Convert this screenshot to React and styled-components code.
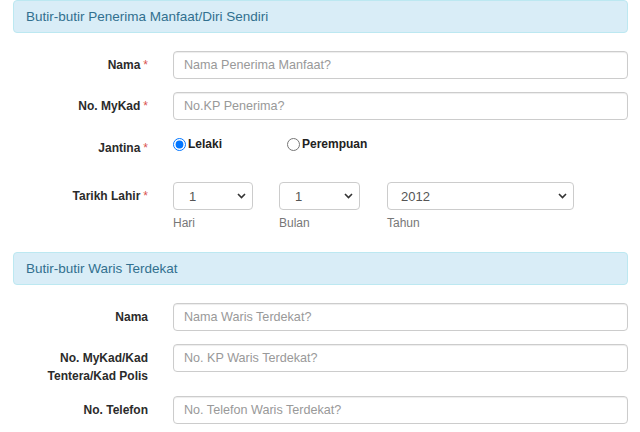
import React from 'react';
import styled, { createGlobalStyle } from 'styled-components';

const GlobalStyle = createGlobalStyle`
  body {
    margin: 0;
    background: #fff;
    font-family: "Liberation Sans", Arial, sans-serif;
    color: #333;
  }
`;

const Page = styled.div`
  padding: 0 12px 0 13px;
  width: 640px;
  box-sizing: border-box;
`;

const PanelHeading = styled.div`
  height: 33px;
  box-sizing: border-box;
  border: 1px solid #bce8f1;
  border-radius: 4px;
  background: #d9edf7;
  color: #31708f;
  font-size: 13.5px;
  line-height: 31px;
  padding: 0 12px;
  margin-bottom: 18px;
`;

const Row = styled.div`
  display: grid;
  grid-template-columns: 135px 1fr;
  column-gap: 25px;
  align-items: start;
  margin-bottom: ${(p) => (p.mb !== undefined ? p.mb : 13)}px;
  min-height: ${(p) => p.minH || 0}px;
`;

const Label = styled.label`
  text-align: right;
  font-weight: bold;
  font-size: 12px;
  line-height: 18px;
  color: #2b2b2b;
  padding-top: ${(p) => (p.pt !== undefined ? p.pt : 5)}px;
`;

const Req = styled.span`
  color: #d9534f;
  font-weight: normal;
  margin-left: 3px;
`;

const TextInput = styled.input`
  width: 100%;
  height: 28px;
  box-sizing: border-box;
  border: 1px solid #ccc;
  border-radius: 4px;
  box-shadow: inset 0 1px 1px rgba(0, 0, 0, 0.075);
  padding: 0 10px;
  font-family: inherit;
  font-size: 12.6px;
  color: #555;
  &::placeholder {
    color: #999;
  }
`;

const RadioGroup = styled.div`
  display: flex;
  padding-top: 4px;
`;

const RadioOption = styled.label`
  display: flex;
  align-items: center;
  width: 114px;
  font-weight: bold;
  font-size: 12px;
  color: #222;
  input {
    margin: 0 2px 0 0;
    width: 13px;
    height: 13px;
    accent-color: #0075ff;
  }
`;

const DateGroup = styled.div`
  display: flex;
`;

const DateField = styled.div`
  width: ${(p) => p.w}px;
  margin-right: ${(p) => p.mr || 0}px;
`;

const SelectWrap = styled.div`
  position: relative;
  height: 28px;
  svg {
    position: absolute;
    right: 7px;
    top: 11px;
    pointer-events: none;
  }
`;

const Select = styled.select`
  appearance: none;
  width: 100%;
  height: 28px;
  box-sizing: border-box;
  border: 1px solid #ccc;
  border-radius: 4px;
  background: #fff;
  padding: 0 20px 0 ${(p) => p.pl || 13}px;
  font-family: inherit;
  font-size: 13px;
  color: #555;
`;

const Hint = styled.div`
  font-size: 12px;
  color: #777;
  line-height: 16px;
  margin-top: 5px;
`;

const Chevron = () => (
  <svg width="9" height="6" viewBox="0 0 9 6">
    <path d="M1 1 L4.5 4.5 L8 1" fill="none" stroke="#333" strokeWidth="1.6" />
  </svg>
);

const DateSelect = ({ w, mr, pl, value, options, hint }) => (
  <DateField w={w} mr={mr}>
    <SelectWrap>
      <Select defaultValue={value} pl={pl}>
        {options.map((o) => (
          <option key={o}>{o}</option>
        ))}
      </Select>
      <Chevron />
    </SelectWrap>
    <Hint>{hint}</Hint>
  </DateField>
);

const days = Array.from({ length: 31 }, (_, i) => String(i + 1));
const months = Array.from({ length: 12 }, (_, i) => String(i + 1));
const years = Array.from({ length: 30 }, (_, i) => String(2024 - i));

const App = () => {
  return (
    <Page>
      <GlobalStyle />
      <PanelHeading>Butir-butir Penerima Manfaat/Diri Sendiri</PanelHeading>

      <Row>
        <Label>Nama<Req>*</Req></Label>
        <TextInput placeholder="Nama Penerima Manfaat?" />
      </Row>
      <Row>
        <Label>No. MyKad<Req>*</Req></Label>
        <TextInput placeholder="No.KP Penerima?" />
      </Row>
      <Row minH={36}>
        <Label pt={6}>Jantina<Req>*</Req></Label>
        <RadioGroup>
          <RadioOption>
            <input type="radio" name="jantina" defaultChecked />
            Lelaki
          </RadioOption>
          <RadioOption>
            <input type="radio" name="jantina" />
            Perempuan
          </RadioOption>
        </RadioGroup>
      </Row>
      <Row mb={21}>
        <Label>Tarikh Lahir<Req>*</Req></Label>
        <DateGroup>
          <DateSelect w={80} mr={26} pl={15} value="1" options={days} hint="Hari" />
          <DateSelect w={81} mr={27} pl={15} value="1" options={months} hint="Bulan" />
          <DateSelect w={187} value="2012" options={years} hint="Tahun" />
        </DateGroup>
      </Row>

      <PanelHeading>Butir-butir Waris Terdekat</PanelHeading>

      <Row>
        <Label>Nama</Label>
        <TextInput placeholder="Nama Waris Terdekat?" />
      </Row>
      <Row mb={11}>
        <Label>No. MyKad/Kad<br />Tentera/Kad Polis</Label>
        <TextInput placeholder="No. KP Waris Terdekat?" />
      </Row>
      <Row>
        <Label>No. Telefon</Label>
        <TextInput placeholder="No. Telefon Waris Terdekat?" />
      </Row>
    </Page>
  );
};

export default App;
